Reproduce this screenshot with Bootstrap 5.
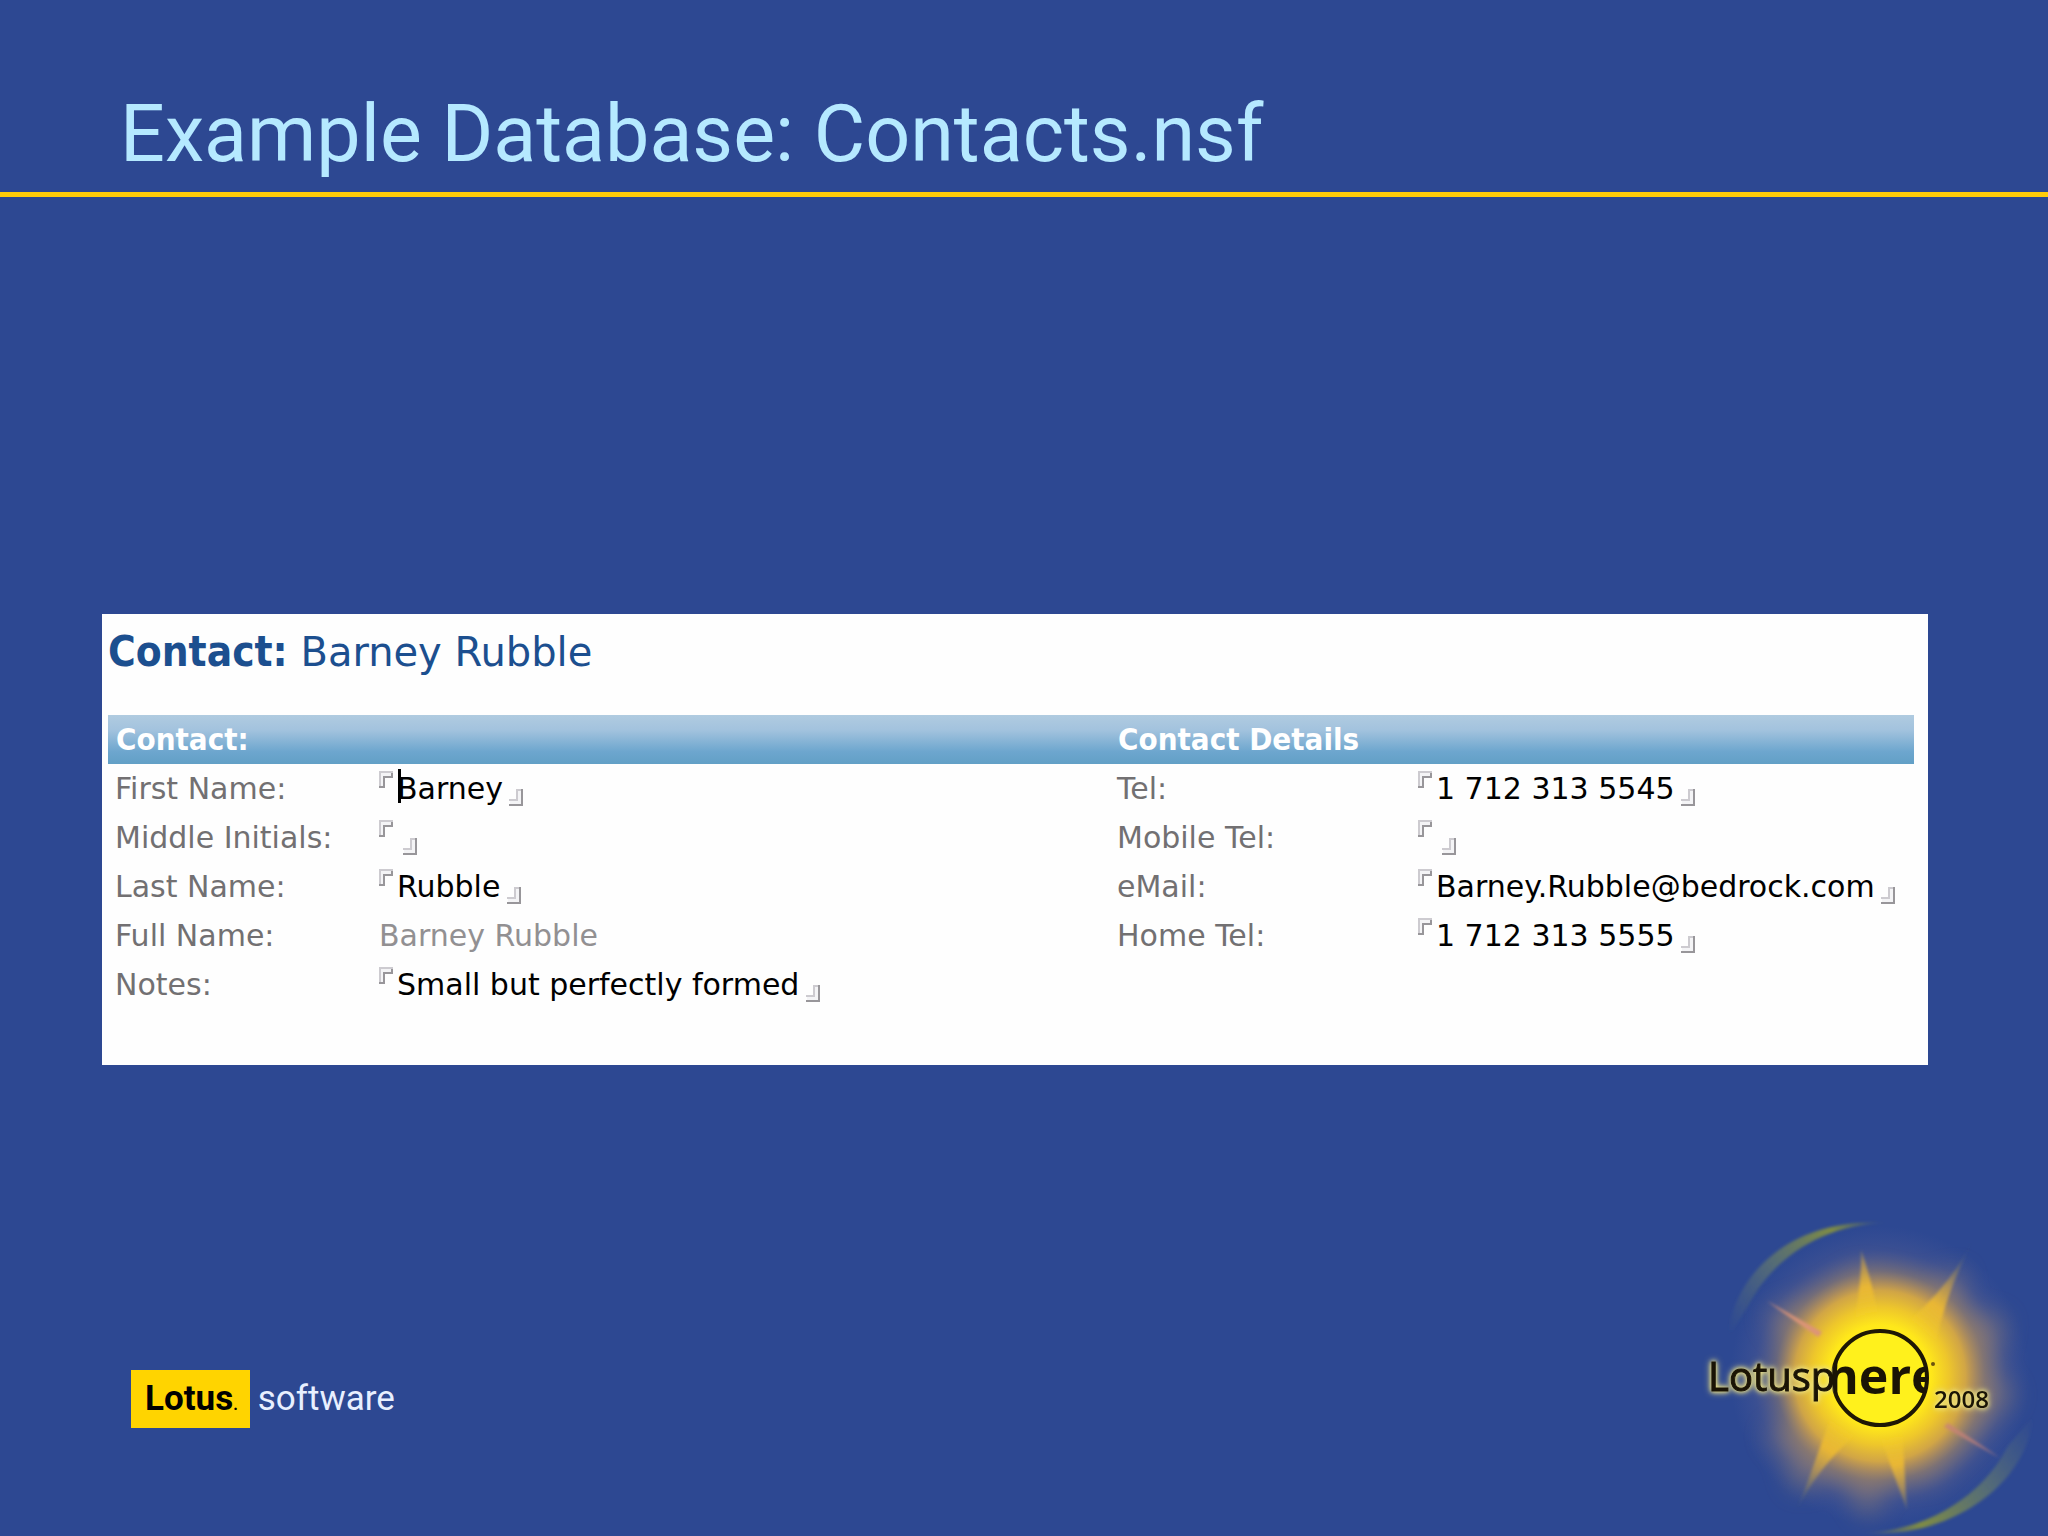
<!DOCTYPE html>
<html lang="en">
<head>
<meta charset="utf-8">
<meta name="viewport" content="width=device-width, initial-scale=1">
<title>Example Database: Contacts.nsf</title>
<link href="https://cdn.jsdelivr.net/npm/bootstrap@5.3.0/dist/css/bootstrap.min.css" rel="stylesheet">
<style>
  body { background: #2d4892; font-family: "DejaVu Sans", sans-serif; }
  .slide-head { padding: 86px 120px 10px; border-bottom: 5px solid #ffcc0a; }
  .slide-head h1 { color: #b5e9ff; font-family: Roboto, sans-serif; font-weight: 400; font-size: 79px; line-height: 96px; }
  .slide-main { padding: 417px 120px 0 102px; }
  .contact-form { background: #fefefe; padding: 10px 14px 56px 6px; }
  .form-title { color: #1c4f8f; font-size: 40px; line-height: 56px; margin-bottom: 35px; }
  .form-title strong, .pane-head { font-family: "DejaVu Sans Condensed", "DejaVu Sans", sans-serif; }
  .form-title strong { font-size: 42px; line-height: 1; }
  .pane-left { flex: 1002 1 0; }
  .pane-right { flex: 804 1 0; }
  .pane-head { background: linear-gradient(#b0cbe0, #a3c3de 30%, #6da6ce 75%, #62a0c6); color: #fff; font-size: 31px; line-height: 49px; padding-left: 8px; }
  .field-row { height: 49px; font-size: 30px; line-height: 49px; padding-left: 7px; white-space: nowrap; }
  .field-row label { color: #727072; width: 264px; flex: none; }
  .pane-right label { width: 301px; }
  .edit-box { border: 0; padding: 0; background: transparent; color: #000; height: 49px; line-height: 49px; width: 0; outline: 0; }
  .edit-wrap { gap: 4px; }
  .read-box { color: #929092; }
  .corner { width: 14px; height: 17px; flex: none; }
  .corner-open { margin-bottom: 18px; }
  .corner-close { margin: 18px 0 0 2px; }
  .text-caret { width: 3px; height: 34px; background: #000; left: 19px; top: 5px; }
  .brand-box { background: #ffd400; color: #000; padding: 0 12px 0 14px; font-weight: 700; }
  .brand-box small { font-size: 16px; line-height: 1; }
  .brand { font-family: Roboto, sans-serif; font-size: 35px; line-height: 58px; margin: 0 0 108px 131px; gap: 8px; color: #e8efff; }
  .sphere { width: 408px; height: 356px; flex: none; }
  .halo { filter: drop-shadow(0 0 2px #f3e98c) drop-shadow(0 0 3px #e6dc7a); }
</style>
<script src="https://cdn.jsdelivr.net/npm/bootstrap@5.3.0/dist/js/bootstrap.bundle.min.js"></script>
</head>
<body class="min-vh-100 d-flex flex-column overflow-x-hidden">
<svg class="d-none" aria-hidden="true">
  <symbol id="open" viewBox="0 0 14 17">
    <path d="M1 17V1H14" fill="none" stroke="#cdcbd0" stroke-width="2"/>
    <path d="M2 15V2H12V5H4V15Z" fill="#f4f4f6"/>
    <path d="M13 2V6H5V16H0" fill="none" stroke="#98969a" stroke-width="2"/>
  </symbol>
  <symbol id="close" viewBox="0 0 14 17">
    <path d="M0 11H8V1H14" fill="none" stroke="#cdcbd0" stroke-width="2"/>
    <path d="M9 2H12V15H1V12H9Z" fill="#f4f4f6"/>
    <path d="M13 0V16H0" fill="none" stroke="#98969a" stroke-width="2"/>
  </symbol>
</svg>

<header class="slide-head"><h1 class="m-0">Example Database: Contacts.nsf</h1></header>

<main class="slide-main">
  <form class="contact-form">
    <h2 class="form-title"><strong>Contact:</strong> Barney Rubble</h2>
    <div class="d-flex">
      <section class="pane-left">
        <h3 class="pane-head fw-bold m-0">Contact:</h3>
        <div class="field-row d-flex"><label for="first">First Name:</label>
          <div class="edit-wrap d-flex align-items-center position-relative"><svg class="corner corner-open"><use href="#open"/></svg><input class="edit-box" id="first" value="Barney"><span class="text-caret position-absolute"></span><svg class="corner corner-close"><use href="#close"/></svg></div></div>
        <div class="field-row d-flex"><label for="middle">Middle Initials:</label>
          <div class="edit-wrap d-flex align-items-center"><svg class="corner corner-open"><use href="#open"/></svg><input class="edit-box" id="middle" value=""><svg class="corner corner-close"><use href="#close"/></svg></div></div>
        <div class="field-row d-flex"><label for="last">Last Name:</label>
          <div class="edit-wrap d-flex align-items-center"><svg class="corner corner-open"><use href="#open"/></svg><input class="edit-box" id="last" value="Rubble"><svg class="corner corner-close"><use href="#close"/></svg></div></div>
        <div class="field-row d-flex"><label for="full">Full Name:</label><output class="read-box p-0" id="full">Barney Rubble</output></div>
        <div class="field-row d-flex"><label for="notes">Notes:</label>
          <div class="edit-wrap d-flex align-items-center"><svg class="corner corner-open"><use href="#open"/></svg><input class="edit-box" id="notes" value="Small but perfectly formed"><svg class="corner corner-close"><use href="#close"/></svg></div></div>
      </section>
      <section class="pane-right">
        <h3 class="pane-head fw-bold m-0">Contact Details</h3>
        <div class="field-row d-flex"><label for="tel">Tel:</label>
          <div class="edit-wrap d-flex align-items-center"><svg class="corner corner-open"><use href="#open"/></svg><input class="edit-box" id="tel" value="1 712 313 5545"><svg class="corner corner-close"><use href="#close"/></svg></div></div>
        <div class="field-row d-flex"><label for="mobile">Mobile Tel:</label>
          <div class="edit-wrap d-flex align-items-center"><svg class="corner corner-open"><use href="#open"/></svg><input class="edit-box" id="mobile" value=""><svg class="corner corner-close"><use href="#close"/></svg></div></div>
        <div class="field-row d-flex"><label for="email">eMail:</label>
          <div class="edit-wrap d-flex align-items-center"><svg class="corner corner-open"><use href="#open"/></svg><input class="edit-box" id="email" value="Barney.Rubble@bedrock.com"><svg class="corner corner-close"><use href="#close"/></svg></div></div>
        <div class="field-row d-flex"><label for="home">Home Tel:</label>
          <div class="edit-wrap d-flex align-items-center"><svg class="corner corner-open"><use href="#open"/></svg><input class="edit-box" id="home" value="1 712 313 5555"><svg class="corner corner-close"><use href="#close"/></svg></div></div>
      </section>
    </div>
  </form>
</main>

<footer class="mt-auto d-flex justify-content-between align-items-end">
  <div class="brand d-flex"><span class="brand-box">Lotus<small>.</small></span><span>software</span></div>
  <svg class="sphere" viewBox="0 0 408 356" role="img" aria-label="Lotusphere 2008">
    <defs>
      <radialGradient id="sun" gradientUnits="userSpaceOnUse" cx="240" cy="196" r="150">
        <stop offset="0" stop-color="#fff21a"/><stop offset=".34" stop-color="#ffe81a"/>
        <stop offset=".46" stop-color="#f3ca28" stop-opacity=".96"/><stop offset=".57" stop-color="#dcac40" stop-opacity=".9"/>
        <stop offset=".62" stop-color="#c79b50" stop-opacity=".75"/><stop offset=".7" stop-color="#a68768" stop-opacity=".45"/>
        <stop offset=".84" stop-color="#857690" stop-opacity=".16"/><stop offset="1" stop-color="#7070a0" stop-opacity="0"/>
      </radialGradient>
      <radialGradient id="ray" gradientUnits="userSpaceOnUse" cx="240" cy="196" r="150">
        <stop offset=".4" stop-color="#fbd622" stop-opacity="0"/><stop offset=".6" stop-color="#efbb30" stop-opacity=".9"/><stop offset=".75" stop-color="#c8a04a" stop-opacity=".7"/><stop offset="1" stop-color="#7f8258" stop-opacity=".1"/>
      </radialGradient>
      <linearGradient id="arcTop" gradientUnits="userSpaceOnUse" x1="90" y1="155" x2="245" y2="42"><stop offset="0" stop-color="#5c7278" stop-opacity="0"/><stop offset=".35" stop-color="#667c6c" stop-opacity=".6"/><stop offset=".75" stop-color="#84903f" stop-opacity=".95"/><stop offset="1" stop-color="#84903f" stop-opacity="0"/></linearGradient>
      <linearGradient id="arcLow" gradientUnits="userSpaceOnUse" x1="395" y1="240" x2="225" y2="354"><stop offset="0" stop-color="#5c7278" stop-opacity="0"/><stop offset=".35" stop-color="#667c6c" stop-opacity=".65"/><stop offset=".75" stop-color="#84903f" stop-opacity=".95"/><stop offset="1" stop-color="#93983f" stop-opacity="0"/></linearGradient>
      <filter id="soft" x="-30%" y="-30%" width="160%" height="160%"><feGaussianBlur stdDeviation="1.4"/></filter>
      <filter id="softer" x="-30%" y="-30%" width="160%" height="160%"><feGaussianBlur stdDeviation="13"/></filter>
      <clipPath id="disc"><circle cx="240" cy="198" r="48"/></clipPath>
    </defs>
    <g filter="url(#soft)">
      <path d="M88 158C92 96 150 36 248 43C180 44 132 80 108 126Z" fill="url(#arcTop)"/>
      <path d="M393 236C388 304 310 360 222 353C294 351 346 310 368 266Z" fill="url(#arcLow)"/>
    </g>
    <path d="M165 235L125 255 145 272 155 310 200 295 228 340 250 300 290 300 330 260 375 215 350 190 365 140 320 130 322 90 285 105 220 90 180 115 125 135 150 165Z" fill="#9a8268" opacity=".6" filter="url(#softer)"/>
    <circle cx="240" cy="196" r="150" fill="url(#sun)"/>
    <g filter="url(#soft)" fill="url(#ray)">
      <path d="M332 62Q306 114 296 160L270 140Q310 105 332 62Z"/>
      <path d="M221 70Q234 106 240 150L212 150Q222 110 221 70Z"/>
      <path d="M157 330Q172 290 190 240L214 256Q176 290 157 330Z"/>
      <path d="M267 330Q252 290 238 250L262 246Q264 285 267 330Z"/>
      <path d="M127 121L182 152 178 157Z" fill="#dd9478"/>
      <path d="M360 278L308 243 304 247Z" fill="#c98378" opacity=".8"/>
    </g>
    <g font-family="Open Sans, sans-serif" fill="#1a1405">
      <circle cx="240" cy="198" r="47" fill="#fff11c" stroke="#1e1705" stroke-width="4"/>
      <g class="halo">
        <text x="68" y="211" font-size="40" stroke="#1a1405" stroke-width="1">Lotusp</text>
        <text x="294" y="228" font-size="24" font-weight="600">2008</text>
      </g>
      <text x="186" y="214" font-size="50" font-weight="700" clip-path="url(#disc)">here</text>
      <circle cx="293" cy="184" r="2" fill="#6b5210"/>
    </g>
  </svg>
</footer>
<script>
  // Each edit box is as wide as the text that it holds.
  const pen = document.createElement('canvas').getContext('2d');
  document.querySelectorAll('.edit-box').forEach(box => {
    const fit = () => { pen.font = getComputedStyle(box).font; box.style.width = Math.ceil(pen.measureText(box.value).width) + 'px'; };
    box.addEventListener('input', fit);
    fit();
  });
</script>
</body>
</html>
